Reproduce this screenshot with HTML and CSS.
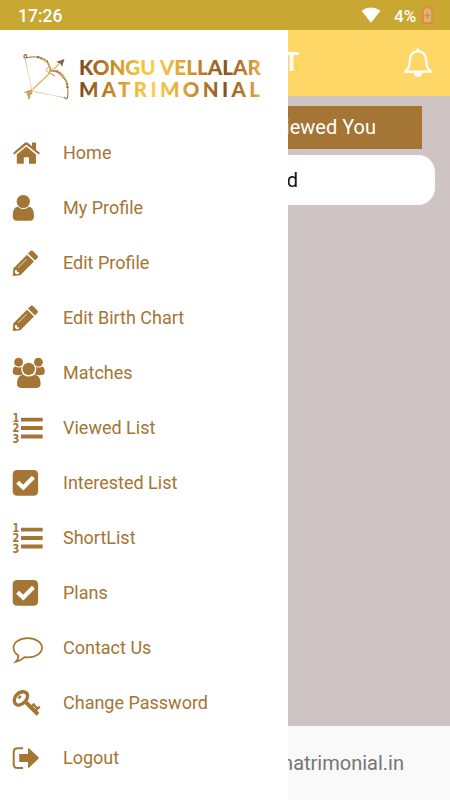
FILE: index.html
```html
<!doctype html>
<html lang="en">
<head>
	<meta charset="UTF-8">
	<title>Kongu Vellalar Matrimonial</title>
	<link rel="stylesheet" href="styles.css">
</head>
<body>
	<div class="status">
		<span class="time">17:26</span>
		<svg class="wifi" width="20" height="16" viewBox="0 0 20 16"><path d="M.5 3.8Q10-3 19.5 3.8L10.6 15Q10 15.7 9.4 15Z"/></svg>
		<span class="percent">4%</span>
		<svg class="battery" width="11" height="18" viewBox="0 0 11 18"><path d="M1.8 2.6H3.5V1H7.5V2.6H9.2Q10 2.6 10 3.4V16.2Q10 17 9.2 17H1.8Q1 17 1 16.2V3.4Q1 2.6 1.8 2.6Z"/><path d="M5.5 6.8V12.2M2.9 9.5H8.1"/></svg>
	</div>
	<div class="screen">
		<header class="topbar">
			<h1>T</h1>
			<svg class="bell" width="30" height="32" viewBox="0 0 30 32"><path d="M2 24.7Q6.7 21.5 6.7 14Q7 4.7 15 4.2Q23 4.7 23.3 14Q23.3 21.5 28 24.7Z"/><path class="solid" d="M10.7 25.5H19.3Q18.6 30 15 30Q11.4 30 10.7 25.5ZM13.3 4V2.6Q15 .2 16.7 2.6V4Z"/></svg>
		</header>
		<main>
			<div class="tab">Viewed You</div>
			<div class="card">d</div>
		</main>
		<footer>matrimonial.in</footer>

		<nav class="drawer">
			<svg class="logo" width="288" height="95" viewBox="0 30 288 95">
				<defs>
					<linearGradient id="gold" gradientUnits="userSpaceOnUse" x1="79" y1="0" x2="261" y2="0">
						<stop offset="0" stop-color="#754820"/>
						<stop offset=".15" stop-color="#bd7c22"/>
						<stop offset=".32" stop-color="#f3bd3b"/>
						<stop offset=".42" stop-color="#f9cf55"/>
						<stop offset=".58" stop-color="#dfa22f"/>
						<stop offset=".8" stop-color="#895222"/>
						<stop offset=".9" stop-color="#b77b2b"/>
						<stop offset="1" stop-color="#e9b548"/>
					</linearGradient>
					<linearGradient id="bow" x1="0" y1="0" x2="1" y2="1">
						<stop offset="0" stop-color="#86644c"/>
						<stop offset=".3" stop-color="#e9bd5c"/>
						<stop offset=".55" stop-color="#a98058"/>
						<stop offset=".8" stop-color="#dcb365"/>
						<stop offset="1" stop-color="#8b6540"/>
					</linearGradient>
				</defs>
				<g fill="none" stroke="url(#bow)">
					<path stroke-width="1.2" d="M24.500 58.500Q23 54.500 26 54.500Q27.500 56.500 25.500 58Q37 55.500 43 58.500Q50 62 50.500 71Q58 70 63 76Q69.500 84 67.500 98Q66 100 64 97"/>
					<path stroke-width="2.200" stroke-dasharray="2.500 .8" d="M37 57Q50 60 50.500 71Q59 70 63 76Q67 80 67.500 88"/>
					<path stroke-width="1" d="M47 60L49 66L46 71L55 76M48 75L53 68M56 71L65 80"/>
					<path stroke-width=".6" opacity=".75" d="M25 58L32 91L66 98"/>
				</g>
				<path d="M33 89L50 73M54 69L60 63" fill="none" stroke="#e0b255" stroke-width="1.300"/>
				<path d="M64.500 59L62 67L60.500 63.500L56 62Z" fill="#806150"/>
				<path d="M33 89L31.500 92L33 93L30 95.500L30.500 97.500L28 100L28 96L26.500 95L27.500 93L23 92.500L27 91Z" fill="#cda060"/>
				<g class="brand" fill="url(#gold)">
					<text x="79" y="75.300" textLength="182" lengthAdjust="spacingAndGlyphs">KONGU VELLALAR</text>
					<text x="79" y="97.300" textLength="181">MATRIMONIAL</text>
				</g>
			</svg>
			<ul>
				<li>
					<svg viewBox="0 0 37 37"><path d="M3 19L14.800 8.800Q16.300 7.600 17.800 8.800L22 12.300V8.500H26V15.700L30 19L28.700 20.600L16.400 10.700L4.300 20.600Z"/><path d="M6.800 20.500L16.400 12.600L26 20.500V28.700Q26 29.700 25 29.700H19V23.300H13.800V29.700H7.800Q6.800 29.700 6.800 28.700Z"/></svg>
					<span>Home</span>
				</li>
				<li>
					<svg viewBox="0 0 37 37"><circle cx="13.300" cy="12.500" r="6.600"/><path d="M7.600 17.800Q13.300 22.600 19 17.800Q24 18.500 24 27Q24 31.700 20 31.700H6.700Q2.700 31.700 2.700 27Q2.700 18.500 7.600 17.800Z"/></svg>
					<span>My Profile</span>
				</li>
				<li>
					<svg viewBox="0 0 37 37"><use href="#pencil"/></svg>
					<span>Edit Profile</span>
				</li>
				<li>
					<svg viewBox="0 0 37 37">
						<g id="pencil">
							<path d="M2.700 31.900L3.500 24.200L17 10.700L24 17.500L10.300 31.300Z"/>
							<path d="M18 9.500L20.500 7Q21.800 5.900 23 7L27.400 11.400Q28.500 12.600 27.400 14L25 16.400Z"/>
							<path d="M8 23.800L16.500 15.300" fill="none" stroke="#fff" stroke-width=".7"/>
							<path d="M5.200 26L7 26.300V28.200H8.900L9.200 29.800L6.600 30.200L4.800 28.600Z" fill="#fff"/>
						</g>
					</svg>
					<span>Edit Birth Chart</span>
				</li>
				<li>
					<svg viewBox="0 0 37 37"><circle cx="8.600" cy="8.200" r="4.400"/><circle cx="28.400" cy="8.200" r="4.400"/><path d="M5 12.500Q8.500 14.600 11.500 12.700Q10.600 17.800 13.300 20.500L8.500 21.300Q2.700 21.200 2.700 18Q2.700 13.500 5 12.500ZM32.400 12.500Q29 14.600 26 12.700Q27 17.800 24.300 20.500L29 21.300Q34.800 21.200 34.800 18Q34.800 13.500 32.400 12.500Z"/><circle cx="18.700" cy="14.900" r="6.200"/><path d="M13.300 20.700Q18.700 24.500 24.300 20.700Q30.600 21.500 30.600 29.500Q30.600 33.900 26.600 33.900H11Q7 33.900 7 29.500Q7 21.500 13.300 20.700Z"/></svg>
					<span>Matches</span>
				</li>
				<li>
					<svg viewBox="0 0 37 37">
						<g id="list">
							<path d="M11 8.700H32.700V12.600H11ZM11 17.100H32.700V21H11ZM11 25.600H32.700V29.500H11Z"/>
							<g class="digits"><text x="2.500" y="12.700" textLength="6.800" lengthAdjust="spacingAndGlyphs">1</text><text x="2.500" y="23.200" textLength="6.800" lengthAdjust="spacingAndGlyphs">2</text><text x="2.500" y="33.700" textLength="6.800" lengthAdjust="spacingAndGlyphs">3</text></g>
						</g>
					</svg>
					<span>Viewed List</span>
				</li>
				<li>
					<svg viewBox="0 0 37 37">
						<g id="check">
							<rect x="2.700" y="6" width="25.400" height="25.700" rx="4.300"/>
							<path d="M7.600 18.200L13.300 23.500L23.400 13.300" fill="none" stroke="#fff" stroke-width="4.200"/>
						</g>
					</svg>
					<span>Interested List</span>
				</li>
				<li>
					<svg viewBox="0 0 37 37"><use href="#list"/></svg>
					<span>ShortList</span>
				</li>
				<li>
					<svg viewBox="0 0 37 37"><use href="#check"/></svg>
					<span>Plans</span>
				</li>
				<li>
					<svg class="line" viewBox="0 0 37 37"><path d="M8.300 26.500Q3.500 23.500 3.500 18.800C3.500 13.500 9.500 9.200 17.700 9.200S32 13.500 32 18.800S25.800 28.400 17.700 28.400L14.600 28.200Q10.500 32 5.500 33Q8.500 30 8.300 26.500Z"/></svg>
					<span>Contact Us</span>
				</li>
				<li>
					<svg class="line" viewBox="0 0 37 37"><path stroke-width="3.300" d="M6 11.500Q9.500 7.200 14.300 7.800Q18.400 9 17.400 13.300Q16.800 16.700 12.600 19.700Q8 22.700 5.200 19.700Q3 16 6 11.500Z"/><path stroke-width="4" d="M16 18.300L28 30.400"/><path stroke-width="2.300" d="M21 23L24.500 19.500M25.500 26.800L29.700 22.600M22.800 20L28 25.200"/><path stroke-width="2.500" d="M8.400 14.300L10.800 11.900"/></svg>
					<span>Change Password</span>
				</li>
				<li>
					<svg viewBox="0 0 37 37"><path d="M13 9.200H7.500Q3.700 9.200 3.700 13V25.200Q3.700 29 7.500 29H13" fill="none" stroke="#a47534" stroke-width="2"/><path d="M9.200 15H18V9.800Q18.200 8.800 19.200 9.500L28.500 18.300Q29 19 28.500 19.700L19.200 28.600Q18.200 29.300 18 28.300V23H9.200Z"/></svg>
					<span>Logout</span>
				</li>
			</ul>
		</nav>
	</div>
</body>
</html>
```

FILE: styles.css
```css
* { box-sizing: border-box; }
body { display: flex; flex-direction: column; height: 800px; margin: 0; overflow: hidden; font-family: Roboto, sans-serif; background: #cec4c3; }
.status { display: flex; align-items: center; height: 30px; padding: 0 17px 0 18px; background: #c8a733; color: #fff; font-size: 17.500px; font-weight: 500; }
.time { flex: 1; padding-top: 1px; }
.wifi { margin-right: 13px; fill: #fff; }
.percent { width: 28px; padding-top: 1px; font-size: 17px; }
.battery { fill: #cdbd74; stroke: #fc7646; stroke-width: 1.4; }
.screen { position: relative; display: flex; flex-direction: column; flex: 1; }
.topbar { display: flex; align-items: center; justify-content: space-between; height: 66px; padding: 0 17px 0 284px; background: #ffd766; }
.topbar h1 { margin: 0 0 2px; color: #fff; font-size: 25px; font-weight: 700; }
.bell { fill: none; stroke: #fff; stroke-width: 2.2; stroke-linejoin: round; }
.bell .solid { fill: #fff; stroke: none; }
main { flex: 1; padding: 10px 15px 0 0; }
.tab { width: 422px; height: 43px; padding-right: 46px; background: #a47534; color: #fff; font-size: 20px; line-height: 43px; text-align: right; }
.card { height: 50px; margin-top: 6px; padding-right: 137px; border-radius: 0 17px 17px 0; background: #fff; color: #111; font-size: 20px; line-height: 50px; text-align: right; }
footer { height: 74px; padding-right: 46px; background: #f9f9f9; color: #757575; font-size: 20px; line-height: 74px; text-align: right; }
.drawer { position: absolute; top: 0; left: 0; width: 287.500px; height: 100%; background: #fff; }
.logo { display: block; }
.brand { font-family: Lato, sans-serif; font-size: 20.500px; font-weight: 900; }
.drawer ul { margin: 0; padding: 0; list-style: none; }
.drawer li { display: flex; align-items: center; height: 55px; padding-left: 10px; color: #a47534; font-size: 18px; }
.drawer li svg { width: 37px; height: 37px; margin-right: 16px; fill: #a47534; }
.drawer li .line { fill: none; stroke: #a47534; stroke-width: 1.7; }
.digits { font-family: "DejaVu Sans", sans-serif; font-size: 11.500px; font-weight: 700; }
```
